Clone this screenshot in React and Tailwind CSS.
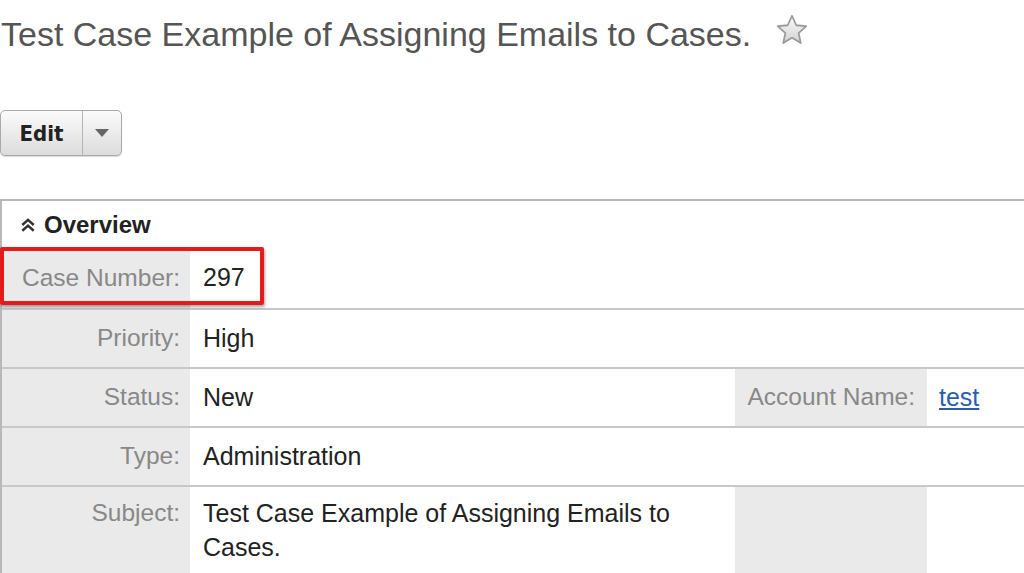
import React from 'react';

const rows = [
  { label: 'Priority:', value: 'High' },
  { label: 'Status:', value: 'New', label2: 'Account Name:', value2: 'test' },
  { label: 'Type:', value: 'Administration' },
];

const Star = () => (
  <svg width="38" height="36" viewBox="0 0 32 30" className="ml-[22px] mt-[-8px]">
    <defs>
      <linearGradient id="sg" x1="0" y1="0" x2="0" y2="1">
        <stop offset="0" stopColor="#fafafa" />
        <stop offset="1" stopColor="#d2d2d2" />
      </linearGradient>
    </defs>
    <path
      d="M16 3 L19.6 11 L28 11.8 L21.6 17.6 L23.4 26 L16 21.6 L8.6 26 L10.4 17.6 L4 11.8 L12.4 11 Z"
      fill="url(#sg)"
      stroke="#9a9a9a"
      strokeWidth="1.5"
      strokeLinejoin="round"
    />
  </svg>
);

const App = () => {
  return (
    <div className="w-[1024px] h-[573px] overflow-hidden bg-white font-[family-name:'Liberation_Sans',Arial,sans-serif]">
      {/* Title */}
      <div className="flex items-center h-[68px] pl-[1px]">
        <h1 className="text-[34px] text-[#555] font-normal leading-none">
          Test Case Example of Assigning Emails to Cases.
        </h1>
        <Star />
      </div>

      {/* Edit button */}
      <div className="mt-[42px] flex">
        <div className="flex h-[46px] rounded-[5px] border border-[#a9a9a9] bg-gradient-to-b from-[#fbfbfb] to-[#dcdcdc] shadow-[0_1px_1px_rgba(0,0,0,0.15)]">
          <div className="w-[81px] flex items-center justify-center text-[22px] font-bold text-[#222] font-[family-name:'DejaVu_Sans_Condensed','DejaVu_Sans',sans-serif]">
            Edit
          </div>
          <div className="w-[39px] border-l border-[#b5b5b5] flex items-center justify-center">
            <svg width="14" height="8" viewBox="0 0 14 8">
              <path d="M0 0 H14 L7 8 Z" fill="#666" />
            </svg>
          </div>
        </div>
      </div>

      {/* Panel */}
      <div className="mt-[43px] border-t-2 border-l-2 border-[#b8b8b8] relative text-[25px]">
        <div className="h-[47px] flex items-center pl-[18px] gap-[8px]">
          <svg width="16" height="16" viewBox="0 0 14 14">
            <path d="M2 7 L7 2.5 L12 7 M2 12 L7 7.5 L12 12" fill="none" stroke="#333" strokeWidth="2.2" />
          </svg>
          <span className="text-[24px] font-bold text-[#222]">Overview</span>
        </div>

        {/* Case Number */}
        <div className="flex h-[62px] border-b-2 border-[#c8c8c8]">
          <div className="w-[188px] bg-[#eaeaea] flex items-center justify-end pr-[10px] text-[24.5px] text-[#888]">
            Case Number:
          </div>
          <div className="flex items-center pl-[13px] text-[#222]">297</div>
        </div>

        {rows.map((r) => (
          <div key={r.label} className="flex h-[59px] border-b-2 border-[#c8c8c8]">
            <div className="w-[188px] shrink-0 bg-[#eaeaea] flex items-center justify-end pr-[10px] text-[24.5px] text-[#888]">
              {r.label}
            </div>
            <div className="w-[545px] shrink-0 flex items-center pl-[13px] text-[#222]">{r.value}</div>
            {r.label2 && (
              <>
                <div className="w-[192px] shrink-0 bg-[#eaeaea] flex items-center justify-end pr-[12px] text-[24.5px] text-[#888]">
                  {r.label2}
                </div>
                <div className="flex items-center pl-[12px]">
                  <a href="#" className="text-[#2a5db0] underline">{r.value2}</a>
                </div>
              </>
            )}
          </div>
        ))}

        {/* Subject */}
        <div className="flex h-[100px]">
          <div className="w-[188px] shrink-0 bg-[#eaeaea] flex justify-end pr-[10px] pt-[9px] leading-[34px] text-[24.5px] text-[#888]">
            Subject:
          </div>
          <div className="w-[545px] shrink-0 pl-[13px] pr-[40px] pt-[9px] leading-[34px] text-[#222]">
            Test Case Example of Assigning Emails to Cases.
          </div>
          <div className="w-[192px] shrink-0 bg-[#eaeaea]" />
        </div>

        {/* annotation */}
        <div className="absolute left-[-2px] top-[46px] w-[264px] h-[58px] border-[4px] border-[#e41b1b] rounded-[2px] shadow-[1px_2px_3px_rgba(0,0,0,0.35)]" />
      </div>
    </div>
  );
};

export default App;
